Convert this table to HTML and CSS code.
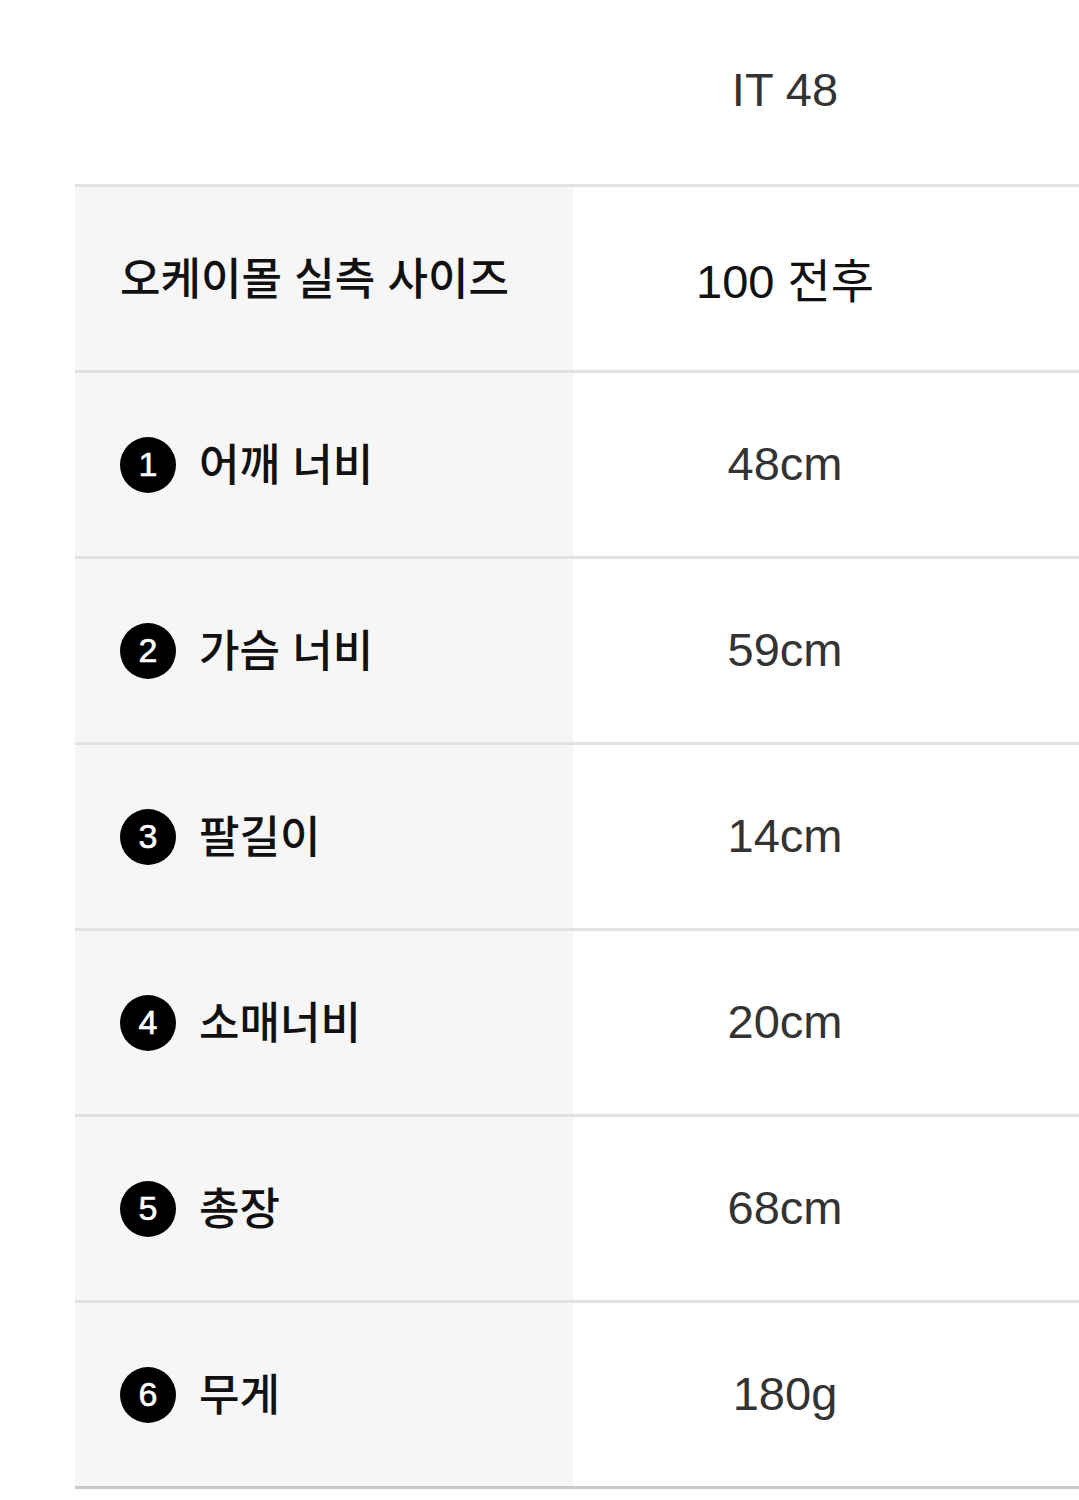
FILE: index.html
```html
<!DOCTYPE html>
<html lang="ko">
<head>
<meta charset="utf-8">
<link rel="stylesheet" href="styles.css">
</head>
<body>
<div class="table">
  <div class="row head">
    <div class="label"></div>
    <div class="value">IT 48</div>
  </div>
  <div class="row">
    <div class="label">오케이몰 실측 사이즈</div>
    <div class="value dark">100 전후</div>
  </div>
  <div class="row">
    <div class="label"><span class="num">1</span>어깨 너비</div>
    <div class="value">48cm</div>
  </div>
  <div class="row">
    <div class="label"><span class="num">2</span>가슴 너비</div>
    <div class="value">59cm</div>
  </div>
  <div class="row">
    <div class="label"><span class="num">3</span>팔길이</div>
    <div class="value">14cm</div>
  </div>
  <div class="row">
    <div class="label"><span class="num">4</span>소매너비</div>
    <div class="value">20cm</div>
  </div>
  <div class="row">
    <div class="label"><span class="num">5</span>총장</div>
    <div class="value">68cm</div>
  </div>
  <div class="row last">
    <div class="label"><span class="num">6</span>무게</div>
    <div class="value">180g</div>
  </div>
</div>
</body>
</html>
```
FILE: styles.css
```css
html, body {
  margin: 0;
  padding: 0;
  background: #fff;
}
body {
  font-family: "Liberation Sans", "Noto Sans CJK KR", sans-serif;
  color: #111;
}
.table {
  margin-left: 75px;
  width: 1004px;
}
.row {
  display: grid;
  grid-template-columns: 498px 506px;
  height: 183px;
  border-bottom: 3px solid #e2e2e2;
}
.row.head {
  height: 184px;
}
.row.last {
  border-bottom-color: #c9c9c9;
}
.label {
  background: #f6f6f6;
  display: flex;
  align-items: center;
  padding-left: 45px;
  padding-bottom: 6px;
  font-family: "Noto Sans CJK KR", sans-serif;
  font-size: 44px;
  font-weight: 500;
  color: #111;
}
.head .label {
  background: #fff;
}
.num {
  width: 56px;
  height: 56px;
  border-radius: 50%;
  background: #000;
  color: #fff;
  font-family: "Liberation Sans", sans-serif;
  font-size: 34px;
  font-weight: 400;
  display: flex;
  align-items: center;
  justify-content: center;
  margin-right: 23px;
  margin-top: 6px;
  -webkit-text-stroke: 0.6px #fff;
}
.value {
  display: flex;
  align-items: center;
  justify-content: center;
  padding-right: 82px;
  padding-bottom: 3px;
  font-size: 47px;
  color: #333;
}
.head .value {
  padding-bottom: 6px;
}
.value.dark {
  color: #111;
}
```
